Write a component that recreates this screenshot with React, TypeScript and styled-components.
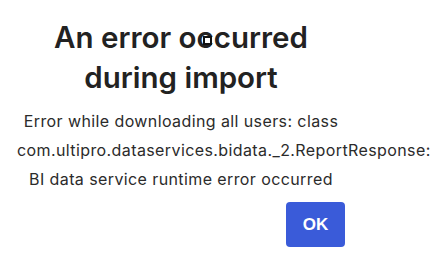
import React from "react";
import styled, { createGlobalStyle } from "styled-components";

const Global = createGlobalStyle`
  html, body { margin: 0; padding: 0; background: #ffffff; }
  body { width: 447px; height: 264px; overflow: hidden; font-family: Inter, "Noto Sans", sans-serif; }
`;

const Dialog = styled.div`
  position: relative;
  box-sizing: border-box;
  width: 362px;
  padding: 17px 17px 0;
  display: flex;
  flex-direction: column;
  align-items: stretch;
`;

const Title = styled.h1`
  margin: 0;
  font-family: Inter, "Noto Sans", sans-serif;
  font-size: 29.5px;
  line-height: 40px;
  font-weight: 600;
  color: #222222;
  text-align: center;
`;

const Message = styled.p`
  margin: 10px 0 0;
  font-family: Inter, "Noto Sans", sans-serif;
  font-size: 16px;
  line-height: 29px;
  letter-spacing: 0.4px;
  font-weight: 400;
  color: #2b2b2b;
  text-align: center;
  white-space: nowrap;
`;

const Line = styled.span`
  display: block;
`;

const Footer = styled.div`
  display: flex;
  justify-content: flex-end;
  margin-top: 8px;
`;

const OkButton = styled.button`
  width: 59px;
  height: 45px;
  border: none;
  border-radius: 4px;
  background: #3a5bd9;
  color: #ffffff;
  font-family: "Liberation Sans", Arial, sans-serif;
  font-weight: 700;
  font-size: 17px;
  cursor: pointer;
`;

const Cursor = styled.span`
  position: absolute;
  left: 203px;
  top: 36px;
  width: 5px;
  height: 5px;
  border: 2px solid #111;
  background: #fff;
`;

export default function App() {
  return (
    <>
      <Global />
      <Dialog>
        <Title>
          An error occurred
          <br />
          during import
        </Title>
        <Message>
          <Line>Error while downloading all users: class</Line>
          <Line>com.ultipro.dataservices.bidata._2.ReportResponse:</Line>
          <Line>BI data service runtime error occurred</Line>
        </Message>
        <Footer>
          <OkButton>OK</OkButton>
        </Footer>
        <Cursor />
      </Dialog>
    </>
  );
}
